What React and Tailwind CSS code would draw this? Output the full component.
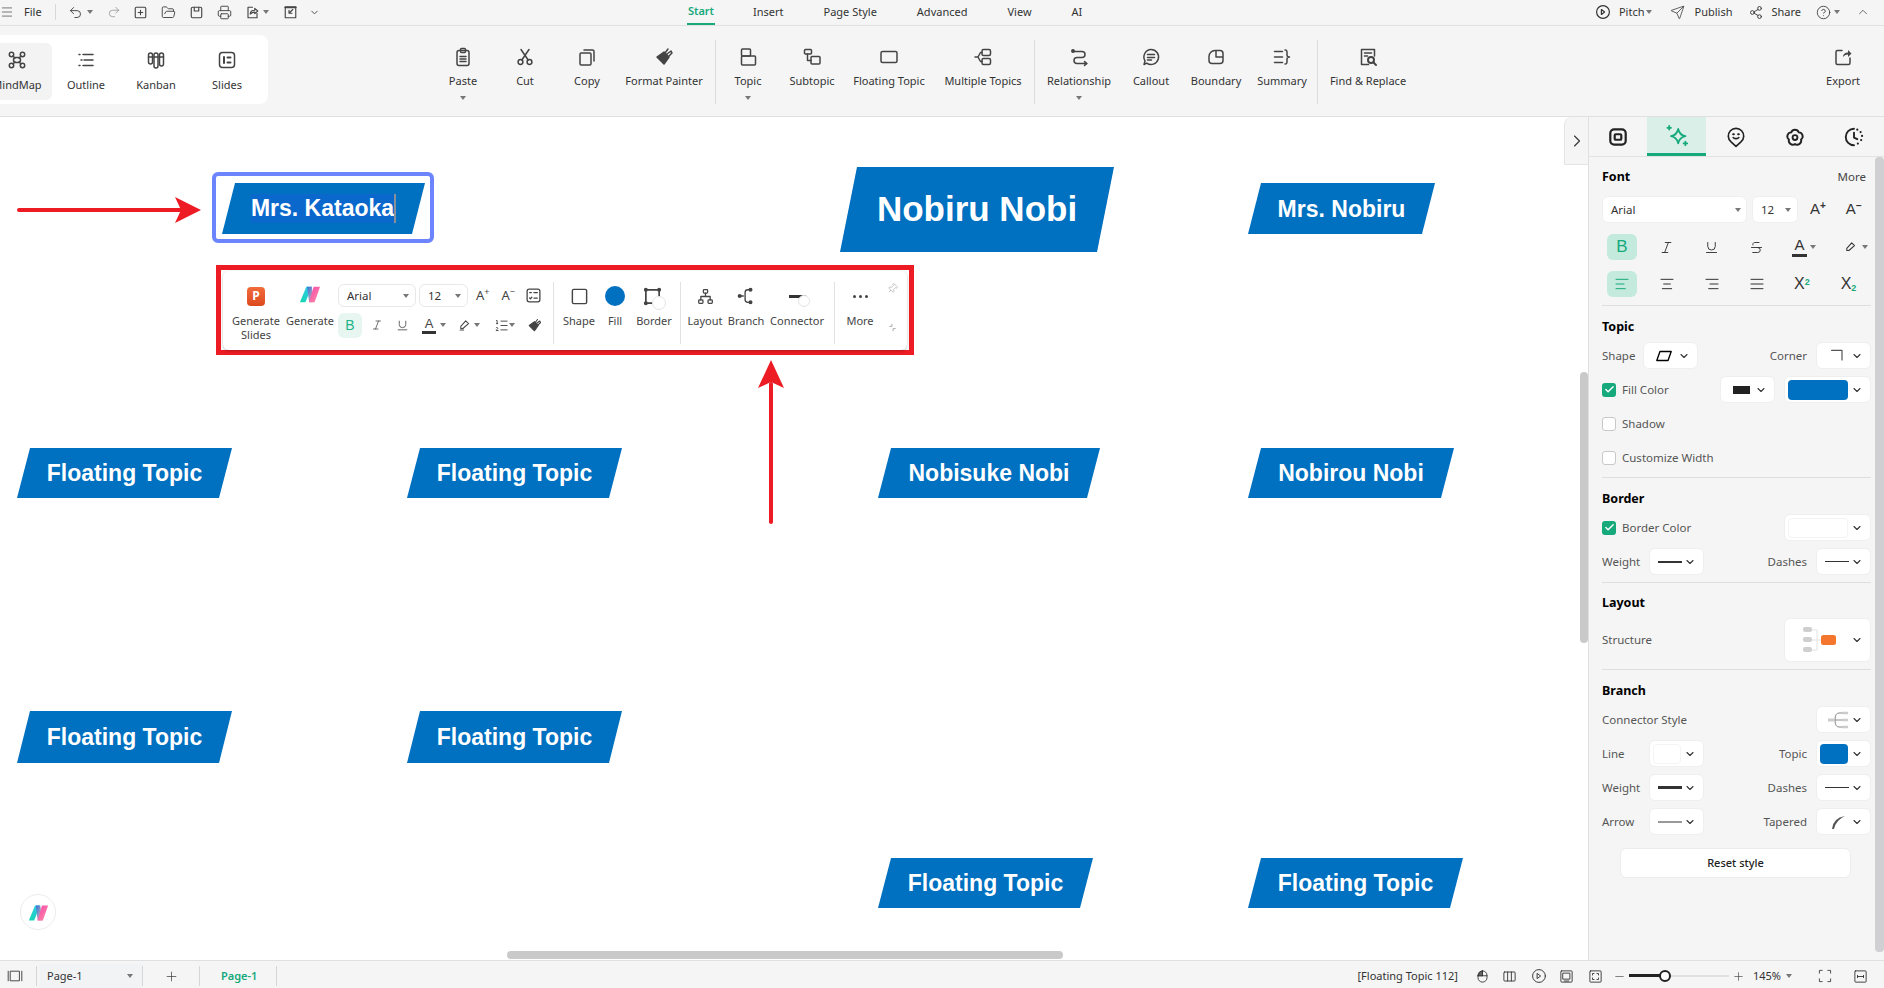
import React from "react";
import { Undo2, Redo2, FolderOpen, Printer, ChevronDown, ChevronUp, ChevronRight, Menu, Plus, Minus, Send, HelpCircle, Pin, Italic, Underline, Strikethrough, AlignLeft, AlignCenter, AlignRight, AlignJustify, Check, ListOrdered } from "lucide-react";

const S = ({ s = 20, c = "", sw = 1.5, children, vb = "0 0 20 20" }) => (
  <svg width={s} height={s} viewBox={vb} fill="none" stroke="currentColor" strokeWidth={sw} strokeLinecap="round" strokeLinejoin="round" className={c}>{children}</svg>
);
const Caret = ({ c = "" }) => <span className={"inline-block w-0 h-0 border-l-[3px] border-r-[3px] border-t-[4px] border-l-transparent border-r-transparent border-t-[#777] " + c} />;

const Brush = ({ s = 20 }) => (
  <S s={s}><path d="M3 10 L10 17 L15 10 L10 5 Z" fill="currentColor" /><path d="M11 6 L14 2 M13 7 L17 4 L18 6 L15 9" /></S>
);

const IconPaste = () => <S><rect x="4" y="3.5" width="12" height="15" rx="2" /><rect x="7.5" y="1.5" width="5" height="4" rx="1" /><path d="M7 9.5h6M7 12h6M7 14.5h6" /></S>;
const IconCut = () => <S><circle cx="5.5" cy="15" r="2.4" /><circle cx="14.5" cy="15" r="2.4" /><path d="M6.8 13 L14 2.5 M13.2 13 L6 2.5" /></S>;
const IconCopy = () => <S><rect x="3" y="6" width="11" height="12" rx="1.2" /><path d="M7 3h8.5a1.5 1.5 0 0 1 1.5 1.5V14" /></S>;
const IconTopic = () => <S><rect x="3.5" y="2" width="9" height="7" rx="1" /><rect x="3.5" y="9" width="14" height="9" rx="1" /></S>;
const IconSubtopic = () => <S><rect x="2.5" y="2.5" width="7" height="4.5" rx="1" /><path d="M5.5 7v6.5H9" /><rect x="9" y="9.5" width="9" height="7.5" rx="1" /></S>;
const IconFloating = () => <S><rect x="2" y="4.5" width="16" height="11" rx="1.5" /></S>;
const IconMultiple = () => <S><rect x="9" y="2.5" width="8.5" height="6" rx="1.5" /><rect x="9" y="11.5" width="8.5" height="6" rx="1.5" /><path d="M9 5.5 H7.5 L5 10 L7.5 14.5 H9 M2 10 H5" /></S>;
const IconRelation = () => <S><circle cx="4" cy="4" r="1.2" fill="currentColor" /><path d="M5 4.5 H13 a3 3 0 0 1 0 6 H8 a3 3 0 0 0 0 6 H16" /><path d="M15.5 14.5 L18 16.5 L15.5 18.5" fill="currentColor" /></S>;
const IconCallout = () => <S><path d="M10 2.5a7.5 7.5 0 1 1-4.3 13.6L3 17.5l1-3.6A7.5 7.5 0 0 1 10 2.5z" /><path d="M6.5 7.5h7M6.5 10.5h7M6.5 13h4" /></S>;
const IconBoundary = () => <S><path d="M10.5 3.5H14a3 3 0 0 1 3 3v7a3 3 0 0 1-3 3H6a3 3 0 0 1-3-3v-4a6 6 0 0 1 6-6h1.5zM10 4v6h7" /></S>;
const IconSummary = () => <S><path d="M2.5 4.5h8M2.5 10h8M2.5 15.5h8" /><path d="M13 3c2 0 2 .8 2 2.5V8c0 1 .6 2 2.5 2C15.6 10 15 11 15 12v2.5c0 1.7 0 2.5-2 2.5" /></S>;
const IconFind = () => <S><path d="M16.5 9V2.5h-13v15h7" /><path d="M6.5 6h7M6.5 9h3" /><circle cx="13" cy="13" r="3" strokeWidth="2" /><path d="M15.5 15.5L18 18" strokeWidth="2" /></S>;
const IconExport = () => <S><path d="M9 3.5H4.5A1.5 1.5 0 0 0 3 5v11a1.5 1.5 0 0 0 1.5 1.5h11A1.5 1.5 0 0 0 17 16v-5" /><path d="M10 10c0-3 2-4.5 5-4.5V3l3.5 3.5L15 10V7.5c-2 0-3.5 .8-5 2.5z" fill="currentColor" stroke="none" /></S>;

const Logo = ({ s = 24 }) => (
  <svg width={s} height={s} viewBox="0 0 24 24">
    <defs>
      <linearGradient id="lg1" x1="0" y1="1" x2="1" y2="0"><stop offset="0" stopColor="#12d8b0" /><stop offset="1" stopColor="#35c6ee" /></linearGradient>
      <linearGradient id="lg2" x1="0" y1="0" x2="1" y2="1"><stop offset="0" stopColor="#2a6fdc" /><stop offset="1" stopColor="#f7b9a8" /></linearGradient>
      <linearGradient id="lg3" x1="0" y1="0" x2="1" y2="1"><stop offset="0" stopColor="#f545a8" /><stop offset="1" stopColor="#ff8fa8" /></linearGradient>
    </defs>
    <polygon points="1,21 8,4 14,4 7,21" fill="url(#lg1)" />
    <polygon points="9,4 14,4 16,21 11,21" fill="url(#lg2)" />
    <polygon points="16,4 23,4 17,21 11,21" fill="url(#lg3)" />
  </svg>
);

const RibbonItem = ({ icon, label, w, caret, ml = "" }) => (
  <div className={"flex flex-col items-center pt-[21px] shrink-0 " + w + " " + ml}>
    <div className="h-5 flex items-center text-[#444]">{icon}</div>
    <div className="mt-[7px] h-[14px] leading-[14px] text-[11px] text-[#333] whitespace-nowrap">{label}</div>
    {caret && <Caret c="mt-[8px]" />}
  </div>
);
const RibbonSep = ({ c = "" }) => <div className={"w-px h-[64px] mt-[14px] bg-[#dcdcdc] shrink-0 " + c} />;

const ViewItem = ({ icon, label, w, active }) => (
  <div className={"h-[57px] flex flex-col items-center pt-[7px] rounded-r-md shrink-0 " + w + (active ? " bg-[#f3f3f3]" : "")}>
    <div className={"h-5 flex items-center text-[#444] " + (active ? "-ml-[18px]" : "")}>{icon}</div>
    <div className={"mt-[8px] text-[11px] leading-[14px] text-[#333] whitespace-nowrap " + (active ? "-ml-[18px]" : "")}>{label}</div>
  </div>
);

const Header = () => (
  <div className="h-[26px] shrink-0 bg-[#f5f5f5] border-b border-[#e2e2e2] flex text-[11px] text-[#333]">
    <div className="w-[687px] shrink-0 flex items-center h-[24px] text-[#444]">
      <Menu size={14} strokeWidth={1.2} />
      <span className="ml-[10px] text-[#333]">File</span>
      <div className="w-px h-4 bg-[#d8d8d8] ml-[13px]" />
      <Undo2 size={15} strokeWidth={1.5} className="ml-[12px]" />
      <Caret c="ml-[4px]" />
      <Redo2 size={14} strokeWidth={1.2} className="ml-[14px] text-[#888]" />
      <S s={15} c="ml-[12px]"><rect x="3" y="3" width="14" height="14" rx="1.5" /><path d="M10 7v6M7 10h6" /></S>
      <FolderOpen size={15} strokeWidth={1.5} className="ml-[13px]" />
      <S s={15} c="ml-[13px]"><rect x="3" y="3" width="14" height="14" rx="2" /><path d="M7 3v5h6V3" /></S>
      <Printer size={15} strokeWidth={1.5} className="ml-[13px]" />
      <S s={15} c="ml-[13px]"><path d="M10 3H4v14h12v-6" /><path d="M7 12c0-3 2-5 6-5V4.500L17 8l-4 3.500V9.500c-3 0-4.500 1-6 2.500z" /></S>
      <Caret c="ml-[3px]" />
      <S s={15} c="ml-[14px]"><path d="M3 3h14v14H3z" /><path d="M13 6l-5 5M8 7v4h4" /><path d="M3 3h14" strokeWidth="2.500" /></S>
      <ChevronDown size={11} className="ml-[11px]" />
    </div>
    <div className="flex h-[25px] text-[#333]">
      <div className="w-[28px] h-full flex items-center justify-center text-[#16a97c] font-semibold border-b-[2px] border-[#16a97c]">Start</div>
      <div className="ml-[38px] h-[24px] flex items-center">Insert</div>
      <div className="ml-[40px] h-[24px] flex items-center">Page Style</div>
      <div className="ml-[40px] h-[24px] flex items-center">Advanced</div>
      <div className="ml-[40px] h-[24px] flex items-center">View</div>
      <div className="ml-[40px] h-[24px] flex items-center">AI</div>
    </div>
    <div className="flex-1 flex items-center justify-end h-[24px] pr-[14px]">
      <S s={16}><circle cx="10" cy="10" r="8" /><path d="M8 7l4 3-4 3z" /></S>
      <span className="ml-[8px]">Pitch</span><Caret c="ml-[2px]" />
      <Send size={15} strokeWidth={1.2} className="ml-[18px]" />
      <span className="ml-[9px]">Publish</span>
      <S s={15} c="ml-[17px]" sw={1.2}><circle cx="4.500" cy="10" r="2.500" /><circle cx="14" cy="4.500" r="2.500" /><circle cx="14" cy="15.500" r="2.500" /><path d="M7 9l5-3M7 11l5 3" /></S>
      <span className="ml-[7px]">Share</span>
      <HelpCircle size={15} strokeWidth={1.3} className="ml-[15px]" />
      <Caret c="ml-[3px]" />
      <ChevronUp size={14} strokeWidth={1.2} className="ml-[16px]" />
    </div>
  </div>
);

const Ribbon = () => (
  <div className="h-[91px] shrink-0 bg-[#f5f5f5] border-b border-[#e0e0e0] flex">
    <div className="w-[268px] h-[69px] mt-[9px] bg-white rounded-r-lg flex items-start pt-[8px] shrink-0 overflow-hidden">
      <ViewItem w="w-[52px]" active label="MindMap" icon={<S s={20}><circle cx="4.500" cy="4.500" r="2.200" /><circle cx="15.500" cy="4.500" r="2.200" /><circle cx="4.500" cy="15.500" r="2.200" /><circle cx="15.500" cy="15.500" r="2.200" /><rect x="6.500" y="7.500" width="7" height="5" rx="2.500" /><path d="M6 6l2 2M14 6l-2 2M6 14l2-2M14 14l-2-2" /></S>} />
      <ViewItem w="w-[68px]" label="Outline" icon={<S s={20}><path d="M3 4.500h1M7 4.500h10M5 10h1M8 10h9M3 15.500h1M7 15.500h10" /></S>} />
      <ViewItem w="w-[72px]" label="Kanban" icon={<S s={20}><rect x="2.500" y="3" width="4" height="11" rx="2" /><rect x="8" y="3" width="4" height="15" rx="2" /><rect x="13.500" y="3" width="4" height="13" rx="2" /><path d="M2.500 7h4M8 7h4M13.500 7h4" /></S>} />
      <ViewItem w="w-[70px]" label="Slides" icon={<S s={20}><rect x="2.500" y="2.500" width="15" height="15" rx="3" /><path d="M7 7v6M10.500 7.500h3M10.500 12.500h3" strokeWidth="2" /></S>} />
    </div>
    <div className="w-[164px] shrink-0" />
    <RibbonItem w="w-[62px]" icon={<IconPaste />} label="Paste" caret />
    <RibbonItem w="w-[62px]" icon={<IconCut />} label="Cut" />
    <RibbonItem w="w-[62px]" icon={<IconCopy />} label="Copy" />
    <RibbonItem w="w-[92px]" icon={<Brush />} label="Format Painter" />
    <RibbonSep c="ml-[5px]" />
    <RibbonItem w="w-[56px] ml-[4px]" icon={<IconTopic />} label="Topic" caret />
    <RibbonItem w="w-[72px]" icon={<IconSubtopic />} label="Subtopic" />
    <RibbonItem w="w-[82px]" icon={<IconFloating />} label="Floating Topic" />
    <RibbonItem w="w-[94px] ml-[6px]" icon={<IconMultiple />} label="Multiple Topics" />
    <RibbonSep c="ml-[4px]" />
    <RibbonItem w="w-[80px] ml-[4px]" icon={<IconRelation />} label="Relationship" caret />
    <RibbonItem w="w-[64px]" icon={<IconCallout />} label="Callout" />
    <RibbonItem w="w-[66px]" icon={<IconBoundary />} label="Boundary" />
    <RibbonItem w="w-[66px]" icon={<IconSummary />} label="Summary" />
    <RibbonSep c="ml-[2px]" />
    <RibbonItem w="w-[96px] ml-[2px]" icon={<IconFind />} label="Find & Replace" />
    <div className="flex-1" />
    <RibbonItem w="w-[60px] mr-[11px]" icon={<IconExport />} label="Export" />
  </div>
);

const nodeFont = "font-['Liberation_Sans',Arial,sans-serif] font-bold text-white";
const Node = ({ pos, text }) => (
  <div className={"absolute bg-[#0070c0] flex items-center justify-center pt-[1px] text-[23px] [clip-path:polygon(13px_0,100%_0,calc(100%-13px)_100%,0_100%)] " + nodeFont + " " + pos}>{text}</div>
);

const FBtn = ({ icon, label, w, two }) => (
  <div className={"flex flex-col items-center shrink-0 " + w}>
    <div className="h-[26px] flex items-center">{icon}</div>
    <div className="mt-[7px] text-[11px] leading-[14px] text-[#444] whitespace-nowrap text-center">{label}{two && <><br />{two}</>}</div>
  </div>
);
const FSep = () => <div className="w-px h-[62px] bg-[#e2e2e2] shrink-0 self-center" />;
const SmallDot = () => <span className="absolute -right-[4px] -bottom-[4px] w-[14px] h-[14px] rounded-full bg-white border border-[#e4e4e4]" />;

const FloatBar = () => (
  <div className="absolute left-[216px] top-[148px] w-[698px] h-[90px] border-[5px] border-[#ed1c24]">
    <div className="ml-[2px] mt-[1px] w-[684px] h-[79px] bg-white rounded-md shadow-[0_1px_3px_rgba(0,0,0,0.25)] flex items-start pt-[10px] pl-[5px] relative">
      <FBtn w="w-[56px]" label="Generate" two="Slides" icon={<div className="w-[18px] h-[19px] mt-1 rounded-[4px] bg-gradient-to-b from-[#f26b3a] to-[#dc4a1e] text-white text-[12px] font-bold flex items-center justify-center leading-none">P</div>} />
      <FBtn w="w-[52px]" label="Generate" icon={<Logo s={22} />} />
      <div className="w-[208px] shrink-0 ml-[2px] pt-[3px]">
        <div className="flex items-center h-[23px]">
          <div className="w-[78px] h-[23px] bg-white border border-[#e8e8e8] rounded-md flex items-center justify-between pl-[8px] pr-[6px] text-[11.500px] text-[#333]"><span>Arial</span><Caret /></div>
          <div className="ml-[3px] w-[49px] h-[23px] bg-white border border-[#e8e8e8] rounded-md flex items-center justify-between pl-[8px] pr-[6px] text-[11.500px] text-[#333]"><span>12</span><Caret /></div>
          <span className="ml-[8px] text-[13px] text-[#444]">A<sup className="text-[9px]">+</sup></span>
          <span className="ml-[12px] text-[13px] text-[#444]">A<sup className="text-[9px]">−</sup></span>
          <S s={17} c="ml-[10px] text-[#444]"><rect x="2.500" y="2.500" width="15" height="15" rx="2.500" /><path d="M5.500 6.500h2M10.500 6.500h4M5.500 13l1 1 1.500-2M10.500 13h4" /></S>
        </div>
        <div className="flex items-center h-[26px] mt-[5px] text-[#444]">
          <div className="w-[24px] h-[25px] rounded-md bg-[#e8f6f2] flex items-center justify-center text-[#1db488] text-[14px] font-['Liberation_Sans',sans-serif]">B</div>
          <Italic size={12} strokeWidth={1.500} className="ml-[9px]" />
          <Underline size={13} strokeWidth={1.500} className="ml-[13px]" />
          <div className="ml-[13px] w-[14px] h-[18px] flex flex-col items-center text-[13px] leading-[15px] border-b-[3px] border-[#333] font-['Liberation_Sans',sans-serif]">A</div>
          <Caret c="ml-[4px]" />
          <S s={14} c="ml-[12px]"><path d="M4 12L11 4l4 4-8 7H4z" /><path d="M3 17h5" /></S>
          <Caret c="ml-[2px]" />
          <ListOrdered size={15} strokeWidth={1.500} className="ml-[14px]" />
          <Caret c="ml-[0px]" />
          <div className="ml-[12px]"><Brush s={15} /></div>
        </div>
      </div>
      <div className="ml-[7px] mt-[1px]"><FSep /></div>
      <FBtn w="w-[38px] ml-[6px]" label="Shape" icon={<S s={19} c="text-[#444] mt-1"><rect x="2.500" y="2.500" width="15" height="15" rx="1.500" /></S>} />
      <FBtn w="w-[34px]" label="Fill" icon={<div className="w-[20px] h-[20px] mt-1 rounded-full bg-[#0070c0]" />} />
      <FBtn w="w-[44px]" label="Border" icon={<div className="relative mt-1 mr-1 text-[#444]"><S s={19} sw={1.800}><rect x="3" y="3" width="14" height="14" /><circle cx="3" cy="3" r="1.200" fill="currentColor" /><circle cx="17" cy="3" r="1.200" fill="currentColor" /><circle cx="3" cy="17" r="1.200" fill="currentColor" /></S><SmallDot /></div>} />
      <div className="ml-[4px] mt-[1px]"><FSep /></div>
      <FBtn w="w-[44px] ml-[2px]" label="Layout" icon={<S s={17} c="text-[#444] mt-1"><rect x="7.500" y="2" width="5" height="4" rx="1" /><rect x="2" y="14" width="5" height="4" rx="1" /><rect x="13" y="14" width="5" height="4" rx="1" /><path d="M10 6v4M4.500 14v-4h11v4" /></S>} />
      <FBtn w="w-[38px]" label="Branch" icon={<S s={18} c="text-[#444] mt-1"><circle cx="3" cy="10" r="1.500" fill="currentColor" /><circle cx="15" cy="3" r="1.500" fill="currentColor" /><circle cx="15" cy="17" r="1.500" fill="currentColor" /><path d="M4.500 10H7M14 3h-2a3 3 0 0 0-3 3v8a3 3 0 0 0 3 3h2" /></S>} />
      <FBtn w="w-[64px]" label="Connector" icon={<div className="relative mt-1 text-[#444]"><div className="w-[17px] h-[3px] bg-[#333]" /><span className="absolute left-[9px] top-[0px] w-[12px] h-[12px] rounded-full bg-white border border-[#e4e4e4]" /></div>} />
      <div className="ml-[5px] mt-[1px]"><FSep /></div>
      <FBtn w="w-[48px] ml-[1px]" label="More" icon={<div className="mt-1 flex gap-[3px]"><i className="w-[3px] h-[3px] rounded-full bg-[#444]" /><i className="w-[3px] h-[3px] rounded-full bg-[#444]" /><i className="w-[3px] h-[3px] rounded-full bg-[#444]" /></div>} />
      <Pin size={11} strokeWidth={1.400} className="absolute right-[9px] top-[12px] text-[#aaa] rotate-45" />
      <S s={11} c="absolute right-[9px] top-[51px] text-[#999]"><path d="M9 4v4H5M11 16v-4h4" /></S>
    </div>
  </div>
);

const Canvas = () => (
  <div className="flex-1 relative bg-white overflow-hidden">
    <svg width="190" height="30" viewBox="0 0 190 30" className="absolute left-[15px] top-[78px]">
      <path d="M4 15 H170" stroke="#ed1c24" strokeWidth="4" strokeLinecap="round" />
      <path d="M160 2 L186 15 L160 28 L166 15 Z" fill="#ed1c24" />
    </svg>
    <div className="absolute left-[212px] top-[55px] w-[222px] h-[71px] rounded-md border-[4px] border-[#6c85ff]" />
    <div className={"absolute left-[222px] top-[66px] w-[203px] h-[51px] bg-[#0070c0] flex items-center justify-center text-[23px] [clip-path:polygon(13px_0,100%_0,calc(100%-13px)_100%,0_100%)] " + nodeFont}>
      <span className="bg-[#0a68cc] h-[29px] leading-[29px]">Mrs. Kataoka</span><span className="w-[2px] h-[29px] bg-[#8a9099]" />
    </div>
    <div className={"absolute left-[840px] top-[50px] w-[274px] h-[85px] bg-[#0070c0] flex items-center justify-center text-[35px] [clip-path:polygon(17px_0,100%_0,calc(100%-17px)_100%,0_100%)] " + nodeFont}>Nobiru Nobi</div>
    <Node pos="left-[1248px] top-[66px] w-[187px] h-[51px]" text="Mrs. Nobiru" />
    <FloatBar />
    <svg width="30" height="173" viewBox="0 0 30 173" className="absolute left-[756px] top-[241px]">
      <path d="M15 164 V26" stroke="#ed1c24" strokeWidth="4" strokeLinecap="round" />
      <path d="M2 30 L15 2 L28 30 L15 24 Z" fill="#ed1c24" />
    </svg>
    <Node pos="left-[17px] top-[331px] w-[215px] h-[50px]" text="Floating Topic" />
    <Node pos="left-[407px] top-[331px] w-[215px] h-[50px]" text="Floating Topic" />
    <Node pos="left-[878px] top-[331px] w-[222px] h-[50px]" text="Nobisuke Nobi" />
    <Node pos="left-[1248px] top-[331px] w-[206px] h-[50px]" text="Nobirou Nobi" />
    <Node pos="left-[17px] top-[594px] w-[215px] h-[52px]" text="Floating Topic" />
    <Node pos="left-[407px] top-[594px] w-[215px] h-[52px]" text="Floating Topic" />
    <Node pos="left-[878px] top-[741px] w-[215px] h-[50px]" text="Floating Topic" />
    <Node pos="left-[1248px] top-[741px] w-[215px] h-[50px]" text="Floating Topic" />
    <div className="absolute left-[20px] top-[777px] w-[36px] h-[36px] rounded-full bg-white border border-[#ececec] flex items-center justify-center"><Logo s={21} /></div>
    <div className="absolute left-[507px] top-[834px] w-[556px] h-[8px] rounded bg-[#c9c9c9]" />
    <div className="absolute right-0 top-[255px] w-[8px] h-[271px] rounded bg-[#c9c9c9]" />
    <div className="absolute right-0 top-0 w-[24px] h-[48px] bg-[#f5f5f5] border-l border-b border-[#e4e4e4] rounded-tl-lg flex items-center justify-center text-[#333]"><ChevronRight size={20} strokeWidth={1.300} /></div>
  </div>
);

const Box = ({ w, h = "h-[27px]", children, c = "" }) => (
  <div className={"bg-white rounded-md border border-[#efefef] flex items-center justify-between shrink-0 pr-[7px] " + w + " " + h + " " + c}>
    {children}
    <ChevronDown size={12} strokeWidth={2.200} className="text-[#333] shrink-0" />
  </div>
);
const Title = ({ children, c = "" }) => <div className={"text-[12.5px] leading-[18px] font-bold text-black " + c}>{children}</div>;
const Label = ({ children, c = "" }) => <span className={"text-[11.5px] text-[#555] " + c}>{children}</span>;
const Divider = ({ c = "" }) => <div className={"h-px bg-[#dedede] " + c} />;
const Checked = () => <div className="w-[14px] h-[14px] rounded-[3px] bg-[#16a97c] flex items-center justify-center text-white shrink-0"><Check size={11} strokeWidth={3} /></div>;
const Unchecked = () => <div className="w-[14px] h-[14px] rounded-[3px] bg-white border border-[#c8c8c8] shrink-0" />;
const Line = ({ h = "h-[2px]", c = "bg-[#333]" }) => <div className={"ml-[8px] w-[24px] " + h + " " + c} />;
const Row = ({ children, c = "mt-[7px]" }) => <div className={"h-[27px] flex items-center justify-between " + c}>{children}</div>;
const Pair = ({ children }) => <div className="flex items-center gap-[9px]">{children}</div>;
const Left = ({ w = "w-[47px]", label, children }) => <div className="flex items-center"><Label c={w + " shrink-0"}>{label}</Label>{children}</div>;
const PT = ({ icon, active }) => (
  <div className={"w-[59px] h-full flex items-center justify-center shrink-0 " + (active ? "bg-[#d9efe8] border-b-[3px] border-[#16a97c] text-[#16a97c]" : "text-[#222]")}>{icon}</div>
);

const Panel = () => (
  <div className="w-[296px] shrink-0 bg-[#f5f5f5] border-l border-[#e0e0e0] flex flex-col relative">
    <div className="h-[40px] shrink-0 flex border-b border-[#e2e2e2] -ml-[1px]">
      <PT icon={<S s={22} sw={2}><rect x="3" y="3" width="14" height="14" rx="3.500" /><rect x="7" y="7.500" width="6" height="5" rx="1" /></S>} />
      <PT active icon={<S s={24}><path d="M11 5 Q12 10 17 11 Q12 12 11 17 Q10 12 5 11 Q10 10 11 5z" /><path d="M3.500 2.500v3M2 4h3M17 15.500v3M15.500 17h3" /></S>} />
      <PT icon={<S s={22}><path d="M5.500 14.500 A7 7 0 1 1 14.500 14.500 L10 18.500 Z" /><path d="M7.500 7.500h.5M12 7.500h.5" strokeWidth="2" /><path d="M7.500 10.500q2.500 2 5 0" /></S>} />
      <PT icon={<S s={22} sw={1.700}><path d="M6.600 5.800 A3.600 3.600 0 0 1 13.400 5.800 A3.600 3.600 0 0 1 15.500 12.300 A3.600 3.600 0 0 1 10 16.300 A3.600 3.600 0 0 1 4.500 12.300 A3.600 3.600 0 0 1 6.600 5.800 Z" /><circle cx="10" cy="10.500" r="2.200" /></S>} />
      <PT icon={<S s={22} sw={1.700}><path d="M10 2.500a7.500 7.500 0 1 0 0 15" /><path d="M13 3.300l.01 0M16 5.500l.01 0M17.300 9l.01 0M16.500 12.800l.01 0M13.500 16l.01 0" strokeWidth="2" /><path d="M10 6v4.500l3 1.500" /></S>} />
    </div>
    <div className="absolute right-0 top-[40px] bottom-[8px] w-[9px] rounded bg-[#d0d0d2]" />
    <div className="w-[269px] ml-[13px] flex flex-col">
      <div className="flex items-center justify-between h-[18px] mt-[11px]"><Title>Font</Title><span className="text-[11.5px] text-[#444] mr-[5px]">More</span></div>
      <div className="flex items-center h-[27px] mt-[10px]">
        <div className="w-[145px] h-[27px] bg-white rounded-md border border-[#efefef] flex items-center justify-between pl-[8px] pr-[5px] text-[11.5px] text-[#333]"><span>Arial</span><Caret /></div>
        <div className="ml-[5px] w-[46px] h-[27px] bg-white rounded-md border border-[#efefef] flex items-center justify-between pl-[8px] pr-[6px] text-[11.5px] text-[#333]"><span>12</span><Caret /></div>
        <span className="ml-[12px] text-[15px] font-medium text-[#333] font-['Liberation_Sans',sans-serif]">A<sup className="text-[10px] font-bold">+</sup></span>
        <span className="ml-[20px] text-[15px] font-medium text-[#333] font-['Liberation_Sans',sans-serif]">A<sup className="text-[10px] font-bold">−</sup></span>
      </div>
      <div className="flex items-center h-[26px] mt-[11px] text-[#333]">
        <div className="ml-[5px] w-[30px] h-[26px] rounded-md bg-[#c4e9dd] flex items-center justify-center text-[#16a97c] text-[17px] font-['Liberation_Sans',sans-serif]">B</div>
        <Italic size={15} strokeWidth={1.500} className="ml-[22px]" />
        <Underline size={15} strokeWidth={1.500} className="ml-[30px]" />
        <Strikethrough size={15} strokeWidth={1.500} className="ml-[30px]" />
        <div className="ml-[28px] w-[15px] h-[20px] text-[15px] leading-[16px] border-b-[3px] border-[#333] text-center font-['Liberation_Sans',sans-serif]">A</div>
        <Caret c="ml-[3px]" />
        <S s={14} c="ml-[28px]"><path d="M4 12L11 4l4 4-8 7H4z" /></S>
        <Caret c="ml-[4px]" />
      </div>
      <div className="flex items-center h-[26px] mt-[11px] text-[#333]">
        <div className="ml-[5px] w-[30px] h-[26px] rounded-md bg-[#c4e9dd] flex items-center justify-center text-[#16a97c]"><AlignLeft size={16} strokeWidth={1.500} /></div>
        <AlignCenter size={16} strokeWidth={1.500} className="ml-[22px]" />
        <AlignRight size={16} strokeWidth={1.500} className="ml-[29px]" />
        <AlignJustify size={16} strokeWidth={1.500} className="ml-[29px]" />
        <span className="ml-[29px] text-[16px] leading-none font-['Liberation_Sans',sans-serif]">X<sup className="text-[9px] font-bold text-[#16a97c]">2</sup></span>
        <span className="ml-[31px] text-[16px] leading-none font-['Liberation_Sans',sans-serif]">X<sub className="text-[9px] font-bold text-[#16a97c]">2</sub></span>
      </div>
      <Divider c="mt-[8px]" />
      <Title c="mt-[12px]">Topic</Title>
      <Row c="mt-[6px]">
        <Left w="w-[41px]" label="Shape"><Box w="w-[55px]" c="pl-[11px]"><S s={18}><path d="M5.500 5H18l-3.500 10H2z" /></S></Box></Left>
        <Pair><Label>Corner</Label><Box w="w-[55px]" c="pl-[13px]"><S s={16} c="text-[#555]"><path d="M2 3h13v12" /></S></Box></Pair>
      </Row>
      <Row>
        <div className="flex items-center gap-[6px]"><Checked /><Label>Fill Color</Label></div>
        <div className="flex items-center gap-[9px]">
          <Box w="w-[55px]" c="pl-[12px]"><div className="w-[17px] h-[8px] bg-[#222]" /></Box>
          <Box w="w-[87px]" c="pl-[3px]"><div className="w-[60px] h-[20px] rounded-[4px] bg-[#0070c0]" /></Box>
        </div>
      </Row>
      <div className="h-[27px] flex items-center gap-[6px] mt-[7px]"><Unchecked /><Label>Shadow</Label></div>
      <div className="h-[27px] flex items-center gap-[6px] mt-[7px]"><Unchecked /><Label>Customize Width</Label></div>
      <Divider c="mt-[6px]" />
      <Title c="mt-[12px]">Border</Title>
      <Row c="mt-[6px]">
        <div className="flex items-center gap-[6px]"><Checked /><Label>Border Color</Label></div>
        <Box w="w-[87px]" c="pl-[3px]"><div className="w-[60px] h-[20px] rounded-[4px] bg-white border border-[#f4f4f4]" /></Box>
      </Row>
      <Row>
        <Left label="Weight"><Box w="w-[55px]"><Line /></Box></Left>
        <Pair><Label>Dashes</Label><Box w="w-[55px]"><Line h="h-px" /></Box></Pair>
      </Row>
      <Divider c="mt-[7px]" />
      <Title c="mt-[11px]">Layout</Title>
      <div className="h-[44px] flex items-center justify-between mt-[6px]">
        <Label>Structure</Label>
        <Box w="w-[87px]" h="h-[44px]" c="pl-[17px]">
          <svg width="34" height="30" viewBox="0 0 34 30"><path d="M9 5h6v20H9M9 15h14" stroke="#e3e3e3" fill="none" /><rect x="1" y="2" width="9" height="5" rx="2" fill="#cfcfcf" /><rect x="1" y="12" width="9" height="5" rx="2" fill="#cfcfcf" /><rect x="1" y="22" width="9" height="5" rx="2" fill="#cfcfcf" /><rect x="19" y="10" width="15" height="10" rx="2.500" fill="#f5772d" /></svg>
        </Box>
      </div>
      <Divider c="mt-[7px]" />
      <Title c="mt-[12px]">Branch</Title>
      <Row c="mt-[6px]">
        <Label>Connector Style</Label>
        <Box w="w-[55px]" c="pl-[11px]"><svg width="20" height="18" viewBox="0 0 20 18"><path d="M0 9h6" stroke="#ccc" strokeWidth="3" /><path d="M14 2H11Q7 2 7 9T11 16h3M7 9h7" stroke="#888" fill="none" /><path d="M14 2h6M14 9h6M14 16h6" stroke="#ccc" strokeWidth="2.500" /></svg></Box>
      </Row>
      <Row>
        <Left label="Line"><Box w="w-[55px]" c="pl-[3px]"><div className="w-[28px] h-[20px] rounded-[4px] bg-white border border-[#f4f4f4]" /></Box></Left>
        <Pair><Label>Topic</Label><Box w="w-[55px]" c="pl-[3px]"><div className="w-[28px] h-[20px] rounded-[4px] bg-[#0070c0]" /></Box></Pair>
      </Row>
      <Row>
        <Left label="Weight"><Box w="w-[55px]"><Line h="h-[3px]" /></Box></Left>
        <Pair><Label>Dashes</Label><Box w="w-[55px]"><Line h="h-px" /></Box></Pair>
      </Row>
      <Row>
        <Left label="Arrow"><Box w="w-[55px]"><Line c="bg-[#999]" /></Box></Left>
        <Pair><Label>Tapered</Label><Box w="w-[55px]" c="pl-[14px]"><svg width="16" height="16" viewBox="0 0 16 16"><path d="M1 15Q2 4 14 2Q5 6 3 15z" fill="#555" /></svg></Box></Pair>
      </Row>
      <div className="ml-[18px] w-[231px] h-[30px] mt-[13px] bg-white rounded-md border border-[#ececec] flex items-center justify-center text-[11px] text-[#222] font-medium">Reset style</div>
    </div>
  </div>
);

const VS = () => <div className="w-px h-[20px] bg-[#d6d6d6] shrink-0" />;
const Status = () => (
  <div className="h-[28px] shrink-0 bg-[#f5f5f5] border-t border-[#e0e0e0] pt-[3px] flex items-center text-[11px] text-[#333]">
    <S s={16} c="ml-[7px]" sw={1.100}><path d="M1.500 4v12M18.500 4v12" /><rect x="4.500" y="4" width="11" height="12" /></S>
    <div className="ml-[13px]"><VS /></div>
    <div className="ml-[3px] w-[102px] h-[24px] bg-[#f2f3f5] flex items-center justify-between pl-[7px] pr-[9px]"><span>Page-1</span><Caret /></div>
    <VS />
    <Plus size={15} strokeWidth={1.100} className="ml-[21px]" />
    <div className="ml-[20px]"><VS /></div>
    <span className="ml-[21px] font-semibold text-[#16a97c]">Page-1</span>
    <div className="ml-[19px]"><VS /></div>
    <div className="flex-1" />
    <span className="whitespace-nowrap">[Floating Topic 112]</span>
    <S s={15} c="ml-[17px]" sw={1.200}><rect x="4" y="2.500" width="12" height="15" rx="6" /><path d="M4 9h12M10 2.500V9" /><path d="M4.500 8a6 6 0 0 1 5.500-5.500V9H4z" fill="#666" /></S>
    <S s={15} c="ml-[12px]" sw={1.200}><rect x="2.500" y="4" width="15" height="12" rx="1" /><path d="M7.500 4v12M12.500 4v12" /></S>
    <S s={16} c="ml-[14px]" sw={1.200}><circle cx="10" cy="10" r="8" /><path d="M8 7l4 3-4 3z" /></S>
    <S s={15} c="ml-[12px]" sw={1.200}><rect x="2.500" y="2.500" width="15" height="15" rx="1" /><rect x="5.500" y="5.500" width="9" height="8" /><path d="M7 16h6" /></S>
    <S s={15} c="ml-[14px]" sw={1.200}><rect x="2.500" y="2.500" width="15" height="15" rx="1" /><path d="M6 8V6h2M12 6h2v2M6 12v2h2M14 12v2h-2" /></S>
    <Minus size={13} strokeWidth={1.100} className="ml-[10px]" />
    <div className="ml-[3px] w-[100px] h-[2px] bg-[#e0e0e0] relative">
      <div className="absolute left-0 top-[-1px] w-[36px] h-[3px] bg-[#222]" />
      <div className="absolute left-[30px] top-[-5px] w-[12px] h-[12px] rounded-full bg-white border-[2.500px] border-[#222]" />
    </div>
    <Plus size={13} strokeWidth={1.100} className="ml-[3px]" />
    <span className="ml-[8px]">145%</span>
    <Caret c="ml-[5px]" />
    <S s={14} c="ml-[26px]" sw={1.200}><path d="M2 6V2h4M14 2h4v4M2 14v4h4M18 14v4h-4" /></S>
    <S s={15} c="ml-[21px] mr-[16px]" sw={1.200}><rect x="2.500" y="2.500" width="15" height="15" rx="1" /><path d="M6 10h8M6 8.500v3M14 8.500v3" /></S>
  </div>
);

export default function App() {
  return (
    <div className="w-[1884px] h-[988px] flex flex-col overflow-hidden bg-white font-['Noto_Sans',sans-serif]">
      <Header />
      <Ribbon />
      <div className="flex-1 flex min-h-0">
        <Canvas />
        <Panel />
      </div>
      <Status />
    </div>
  );
}
